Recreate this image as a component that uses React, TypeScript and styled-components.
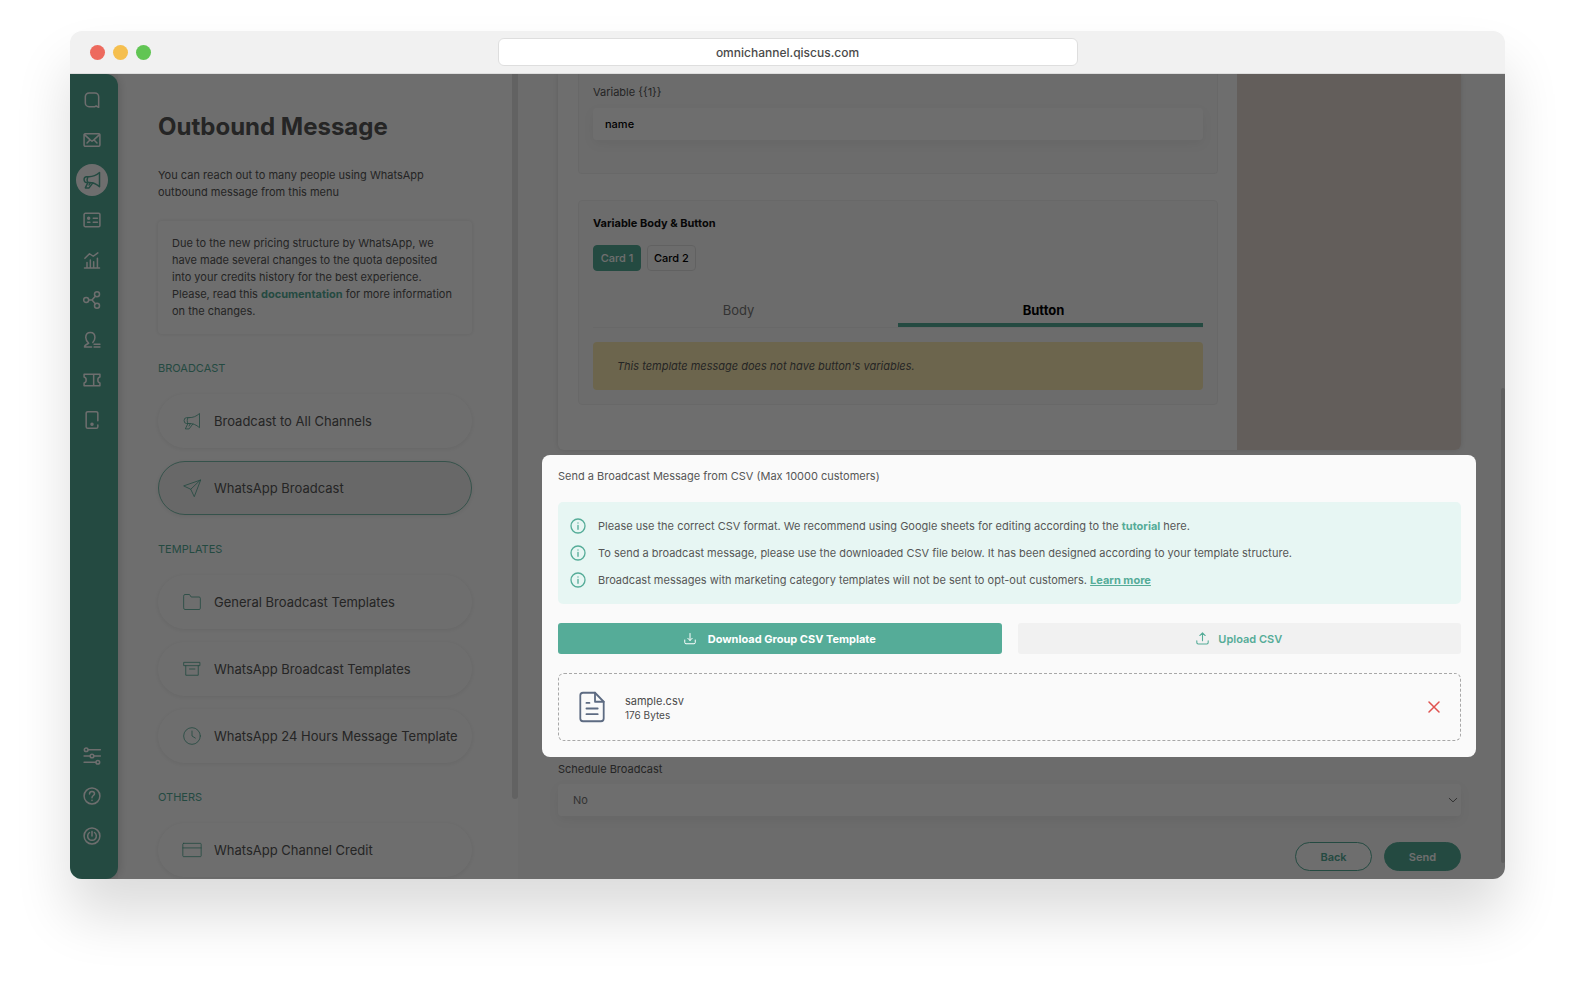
import React from 'react';
import styled, { createGlobalStyle, css } from 'styled-components';

const green = '#55ac98';
const ink = '#565656';

const GlobalStyle = createGlobalStyle`
  *, *::before, *::after { box-sizing: border-box; }
  body {
    margin: 0;
    background: #fff;
    color: ${ink};
    font-family: Inter, 'Liberation Sans', sans-serif;
    font-size: 11px;
    line-height: 16px;
  }
  button, input, select { font: inherit; color: inherit; }
  button { cursor: pointer; }
  h1, h2, p, ul { margin: 0; padding: 0; }
  a { color: inherit; text-decoration: none; }
`;

/* ---------- icons ---------- */

const Svg = styled.svg<{ $size: number }>`
  display: block;
  flex: none;
  width: ${(p) => p.$size}px;
  height: ${(p) => p.$size}px;
  fill: none;
  stroke: currentColor;
  stroke-linecap: round;
  stroke-linejoin: round;
`;

type IconProps = { size?: number; weight?: number };

const icon = (children: React.ReactNode) =>
  ({ size = 20, weight = 1.8 }: IconProps) => (
    <Svg $size={size} viewBox="0 0 24 24" strokeWidth={weight} aria-hidden="true">
      {children}
    </Svg>
  );

const LogoIcon = icon(<path d="M20 20.600V8a4.500 4.500 0 0 0-4.500-4.500H8.500A4.500 4.500 0 0 0 4 8v7.500A4.500 4.500 0 0 0 8.500 20h7l1.500-.8 3 1.600" />);
const MailIcon = icon(
  <>
    <rect x="2.500" y="4.500" width="19" height="15" rx="1.500" />
    <path d="M3 5.500l6.500 6 2.500 2 2.500-2 6.500-6M9.500 12L6 15.500M14.500 12l3.500 3.500" />
  </>,
);
const MegaphoneIcon = icon(
  <>
    <path d="M8.500 8c5 0 8.500-1.500 12.500-5v17c-4-3.500-7.500-5-12.500-5M8.500 8H5.500a3 3.500 0 0 0 0 7h3M7 8.200c-1 2-1 4.600 0 6.600" />
    <path d="M7 15.200L4 21.500h4.500l4.500-6M10 15.200L8.500 18" />
  </>,
);
const ContactIcon = icon(
  <>
    <rect x="2.500" y="4" width="19" height="16" rx="1.500" />
    <circle cx="8" cy="9.800" r="1.200" fill="currentColor" />
    <path d="M6.700 14.700h2.800M13.500 10h5M13.500 14.700h5" />
  </>,
);
const ChartIcon = icon(<path d="M3 21.500h18M6 21v-6M10 21v-9M14 21v-7M18.500 21V10M3.500 10l5.500-5.500 4.500 3L19 3.500" />);
const ShareIcon = icon(
  <>
    <circle cx="5" cy="12" r="3" />
    <circle cx="18" cy="5" r="3" />
    <circle cx="18" cy="19" r="3" />
    <path d="M8 12h4l4-4.500M12 12l4 4.500" />
  </>,
);
const AgentIcon = icon(<path d="M3 20.500h8.500M3 20.500c0-2.500 1.500-3 5-4.500-2-2-3.500-4-3.500-7 0-4 2-6 5.500-6s5.500 2 5.500 6c0 2.500-1 4.500-2.500 6M14.500 17h7M14.500 20.500h7" />);
const TicketIcon = icon(<path d="M2.500 5h19v3.500c-1.500.3-2.500 1.700-2.500 3.500s1 3.200 2.500 3.500V19h-19v-3.500C4 15.200 5 13.800 5 12s-1-3.200-2.500-3.500zM14 5v14" />);
const DeviceIcon = icon(
  <>
    <path d="M19 13V4a2 2 0 0 0-2-2H7a2 2 0 0 0-2 2v16a2 2 0 0 0 2 2h10a2 2 0 0 0 2-2v-2" />
    <circle cx="12" cy="17" r="1.200" fill="currentColor" />
  </>,
);
const SlidersIcon = icon(
  <>
    <circle cx="5" cy="4.500" r="2.200" />
    <circle cx="12" cy="12" r="2.200" />
    <circle cx="19" cy="19.500" r="2.200" />
    <path d="M7.500 4.500H22M2.500 12h7M14.500 12H22M2.500 19.500h14" />
  </>,
);
const HelpIcon = icon(
  <>
    <circle cx="12" cy="12" r="9.500" />
    <path d="M9 9.500c0-1.700 1.300-3 3-3s3 1.300 3 2.800c0 2-3 2.200-3 4.700M12 17.200v.1" />
  </>,
);
const PowerIcon = icon(
  <>
    <circle cx="12" cy="12" r="9.500" />
    <path d="M12 6.500v5.500M9 7.800a5.200 5.200 0 1 0 6 0" />
  </>,
);
const SendIcon = icon(<path d="M22 2.500L2 9.500l8.500 4L14.500 22zM22 2.500L10.500 13.500" />);
const FolderIcon = icon(<path d="M2 4.500A1.500 1.500 0 0 1 3.500 3H9l2 3h9.500A1.500 1.500 0 0 1 22 7.500v12a1.500 1.500 0 0 1-1.500 1.500h-17A1.500 1.500 0 0 1 2 19.500z" />);
const ArchiveIcon = icon(<path d="M2.500 4h19v4h-19zM4.500 8v11.500h15V8M9 12h6.500" />);
const ClockIcon = icon(
  <>
    <circle cx="12" cy="12" r="10" />
    <path d="M12 6v6l4 2.500" />
  </>,
);
const CardIcon = icon(
  <>
    <rect x="1" y="4" width="22" height="16" rx="1" />
    <path d="M1 9.500h22" />
  </>,
);
const InfoIcon = icon(
  <>
    <circle cx="12" cy="12" r="10.500" />
    <path d="M12 11v6M12 7.500v.1" />
  </>,
);
const DownloadIcon = icon(<path d="M12 1v14M7.500 10.500L12 15l4.500-4.500M1.500 14v5a2.500 2.500 0 0 0 2.500 2.500h16a2.500 2.500 0 0 0 2.500-2.500v-5" />);
const UploadIcon = icon(<path d="M12 16V1.500M7 6.500l5-5 5 5M1.500 16v3.500A2.500 2.500 0 0 0 4 22h16a2.500 2.500 0 0 0 2.500-2.500V16" />);
const FileIcon = icon(
  <>
    <path d="M14 2.500H6A1.800 1.800 0 0 0 4.200 4.300v15.400A1.800 1.800 0 0 0 6 21.500h12a1.800 1.800 0 0 0 1.800-1.800V8.500z" />
    <path d="M14 2.500v6h5.800M8.300 9.300h2M8.300 13h7.500M8.300 16.800h7.500" />
  </>,
);
const CloseIcon = icon(<path d="M2 2l20 20M22 2L2 22" />);
const ChevronIcon = icon(<path d="M3 8l9 8.500L21 8" />);

/* ---------- browser window ---------- */

const Page = styled.div`
  padding: 31px 70px 109px;
`;

const BrowserWindow = styled.div`
  border-radius: 12px;
  overflow: hidden;
  min-width: 960px;
`;

const Shadow = styled.div`
  border-radius: 12px;
  box-shadow: 0 36px 56px rgba(0, 0, 0, 0.14);
`;

const TitleBar = styled.header`
  display: grid;
  grid-template-columns: 1fr 580px 1fr;
  align-items: center;
  height: 43px;
  padding: 0 20px;
  background: #f1f1f1;
  border-bottom: 1px solid #dedede;
`;

const Lights = styled.div`
  display: flex;
  gap: 8px;
`;

const Light = styled.span<{ $color: string }>`
  width: 15px;
  height: 15px;
  border-radius: 50%;
  background: ${(p) => p.$color};
`;

const Address = styled.input`
  height: 28px;
  width: 100%;
  border: 1px solid #dedede;
  border-radius: 6px;
  background: #fff;
  color: #4a4a4a;
  font-size: 12px;
  font-weight: 500;
  text-align: center;
`;

const Body = styled.div`
  position: relative;
  display: flex;
  isolation: isolate;
  overflow: hidden;
  background: #fafafa;
`;

/* ---------- rail ---------- */

const Rail = styled.nav`
  position: relative;
  z-index: 1;
  flex: none;
  display: flex;
  flex-direction: column;
  align-items: center;
  width: 48px;
  padding: 6px 4px 23px 0;
  background: ${green};
  border-radius: 0 12px 12px 0;
  box-shadow: 2px 0 8px rgba(0, 0, 0, 0.14);
`;

const RailSpacer = styled.div`
  flex: 1;
`;

const RailLink = styled.a<{ $active?: boolean }>`
  display: grid;
  place-items: center;
  width: 32px;
  height: 32px;
  margin: 4px 0;
  border-radius: 50%;
  color: #fff;
  ${(p) => p.$active && css`
    background: #fff;
    color: ${green};
  `}
`;

/* ---------- menu column ---------- */

const Menu = styled.aside`
  flex: none;
  display: flex;
  width: 400px;
  background: #fff;
`;

const MenuContent = styled.div`
  flex: 1;
  min-width: 0;
  padding: 38px 40px 0;
`;

const Thumb = styled.div`
  flex: none;
  width: 6px;
  height: 90%;
  border-radius: 0 0 3px 3px;
  background: #e3e3e3;
`;

const Title = styled.h1`
  font-size: 24px;
  line-height: 30px;
  font-weight: 700;
`;

const Intro = styled.p`
  margin-top: 25px;
  line-height: 17px;
`;

const Notice = styled.p`
  margin-top: 20px;
  padding: 14px;
  line-height: 17px;
  border-radius: 4px;
  box-shadow: 0 0 4px rgba(0, 0, 0, 0.1);
`;

const Strong = styled.a<{ $underline?: boolean }>`
  color: ${green};
  font-weight: 700;
  text-decoration: ${(p) => (p.$underline ? 'underline' : 'none')};
`;

const GroupTitle = styled.h2`
  margin: 26px 0 18px;
  color: ${green};
  font-size: 11px;
  line-height: 16px;
  font-weight: 400;
`;

const PillList = styled.div`
  display: flex;
  flex-direction: column;
  gap: 13px;
`;

const Pill = styled.a<{ $active?: boolean }>`
  display: flex;
  align-items: center;
  gap: 12px;
  height: 54px;
  padding: 0 0 0 23px;
  border: 1px solid ${(p) => (p.$active ? '#7cbfae' : 'transparent')};
  border-radius: 27px;
  background: ${(p) => (p.$active ? '#f2f2f2' : '#fff')};
  box-shadow: 0 1px 5px rgba(0, 0, 0, 0.08);
  font-size: 13px;
  line-height: 18px;
  white-space: nowrap;
  svg { color: ${green}; }
`;

/* ---------- main column ---------- */

const Main = styled.main`
  flex: 1;
  min-width: 0;
  padding: 0 44px 8px 40px;
`;

const MainThumb = styled.div`
  position: absolute;
  right: 0;
  top: 39%;
  width: 4px;
  height: 59%;
  border-radius: 2px;
  background: #dcdcdc;
`;

const Template = styled.section`
  display: flex;
  background: #fff;
  border-radius: 0 0 6px 6px;
  box-shadow: 0 0 5px rgba(0, 0, 0, 0.12);
  overflow: hidden;
`;

const Variables = styled.div`
  flex: 1;
  display: flex;
  flex-direction: column;
  gap: 26px;
  padding: 0 19px 45px 20px;
`;

const Preview = styled.div`
  width: 224px;
  background: #e5dad3;
`;

const Box = styled.div<{ $open?: boolean }>`
  padding: 14px;
  border: 1px solid #f2f2f2;
  border-radius: 4px;
  background: #fafafa;
  ${(p) => p.$open && css`
    border-top: 0;
    border-radius: 0 0 4px 4px;
    padding: 10px 14px 33px;
  `}
`;

const FieldLabel = styled.label`
  display: block;
`;

const TextInput = styled.input`
  display: block;
  width: 100%;
  height: 32px;
  margin-top: 8px;
  padding: 0 12px;
  border: 0;
  border-radius: 4px;
  background: #fff;
  color: #000;
  font-weight: 500;
  box-shadow: 0 4px 12px rgba(0, 0, 0, 0.06);
`;

const BoxTitle = styled.h2`
  font-size: 11px;
  line-height: 16px;
  font-weight: 700;
  color: #111;
`;

const Chips = styled.div`
  display: flex;
  gap: 6px;
  margin-top: 14px;
`;

const Chip = styled.button<{ $active?: boolean }>`
  min-width: 48px;
  height: 26px;
  padding: 0 6px;
  border: 1px solid ${(p) => (p.$active ? green : '#e2e2e2')};
  border-radius: 4px;
  background: ${(p) => (p.$active ? green : 'transparent')};
  color: ${(p) => (p.$active ? '#fff' : '#000')};
  font-weight: 500;
`;

const Tabs = styled.div`
  display: grid;
  grid-template-columns: 1fr 1fr;
  margin-top: 20px;
  border-bottom: 1px solid #f2f2f2;
`;

const Tab = styled.button<{ $active?: boolean }>`
  height: 36px;
  padding: 5px 14px 0 0;
  border: 0;
  border-bottom: 4px solid ${(p) => (p.$active ? green : 'transparent')};
  border-radius: 3px 3px 0 0;
  background: none;
  color: ${(p) => (p.$active ? '#000' : '#777')};
  font-size: 13px;
  font-weight: ${(p) => (p.$active ? 700 : 400)};
`;

const Warning = styled.p`
  margin-top: 14px;
  padding: 16px 24px;
  border-radius: 4px;
  background: #fbeab2;
  font-style: italic;
`;

/* The lit panel; its spread shadow dims everything else in the window. */
const Spotlight = styled.section`
  position: relative;
  z-index: 2;
  margin: 5px -15px 0 -16px;
  padding: 13px 15px 16px 16px;
  border-radius: 8px;
  background: #fafafa;
  box-shadow: 0 0 0 4000px rgba(0, 0, 0, 0.57);
`;

const InfoList = styled.ul`
  display: flex;
  flex-direction: column;
  gap: 11px;
  margin-top: 18px;
  padding: 16px 12px;
  list-style: none;
  border-radius: 5px;
  background: #e7f6f3;
`;

const InfoRow = styled.li`
  display: flex;
  align-items: center;
  gap: 12px;
  svg { color: ${green}; }
`;

const Actions = styled.div`
  display: grid;
  grid-template-columns: 1fr 1fr;
  gap: 16px;
  margin-top: 19px;
`;

const ActionButton = styled.button<{ $primary?: boolean }>`
  display: flex;
  align-items: center;
  justify-content: center;
  gap: ${(p) => (p.$primary ? 12 : 9)}px;
  height: 31px;
  border: 0;
  border-radius: 3px;
  background: ${(p) => (p.$primary ? green : '#f1f1f1')};
  color: ${(p) => (p.$primary ? '#fff' : green)};
  font-weight: ${(p) => (p.$primary ? 700 : 600)};
`;

const FileRow = styled.div`
  display: flex;
  align-items: center;
  gap: 15px;
  height: 68px;
  margin-top: 19px;
  padding: 0 20px 0 15px;
  border: 1px dashed #a8a8a8;
  border-radius: 6px;
  color: #5d6b82;
`;

const FileInfo = styled.div`
  flex: 1;
  color: #4a4a4a;
`;

const FileSize = styled.p`
  font-size: 10px;
  line-height: 12px;
`;

const RemoveButton = styled.button`
  display: grid;
  place-items: center;
  padding: 0;
  border: 0;
  background: none;
  color: #e0524f;
`;

const Schedule = styled.div`
  margin-top: 4px;
`;

const SelectWrap = styled.div`
  position: relative;
  margin-top: 7px;
  svg {
    position: absolute;
    right: 3px;
    top: 11px;
    pointer-events: none;
  }
`;

const Select = styled.select`
  display: block;
  appearance: none;
  width: 100%;
  height: 32px;
  padding: 0 15px;
  border: 0;
  border-radius: 4px;
  background: #fff;
  color: #777;
  box-shadow: 0 4px 12px rgba(0, 0, 0, 0.06);
`;

const Footer = styled.div`
  display: flex;
  justify-content: flex-end;
  gap: 12px;
  margin-top: 26px;
`;

const RoundButton = styled.button<{ $primary?: boolean }>`
  width: 77px;
  height: 29px;
  border: 1px solid ${green};
  border-radius: 15px;
  background: ${(p) => (p.$primary ? green : '#fff')};
  color: ${(p) => (p.$primary ? '#fff' : green)};
  font-weight: 600;
`;

/* ---------- data ---------- */

const railTop = [
  { label: 'Home', Icon: LogoIcon },
  { label: 'Inbox', Icon: MailIcon },
  { label: 'Outbound', Icon: MegaphoneIcon, active: true },
  { label: 'Contacts', Icon: ContactIcon },
  { label: 'Analytics', Icon: ChartIcon },
  { label: 'Integration', Icon: ShareIcon },
  { label: 'Agents', Icon: AgentIcon },
  { label: 'Tickets', Icon: TicketIcon },
  { label: 'Device', Icon: DeviceIcon },
];

const railBottom = [
  { label: 'Settings', Icon: SlidersIcon },
  { label: 'Help', Icon: HelpIcon },
  { label: 'Log out', Icon: PowerIcon },
];

const groups = [
  {
    title: 'BROADCAST',
    items: [
      { label: 'Broadcast to All Channels', Icon: MegaphoneIcon },
      { label: 'WhatsApp Broadcast', Icon: SendIcon, active: true },
    ],
  },
  {
    title: 'TEMPLATES',
    items: [
      { label: 'General Broadcast Templates', Icon: FolderIcon },
      { label: 'WhatsApp Broadcast Templates', Icon: ArchiveIcon },
      { label: 'WhatsApp 24 Hours Message Template', Icon: ClockIcon },
    ],
  },
  {
    title: 'OTHERS',
    items: [{ label: 'WhatsApp Channel Credit', Icon: CardIcon }],
  },
];

export default function App() {
  return (
    <>
      <GlobalStyle />
      <Page>
        <Shadow>
          <BrowserWindow>
            <TitleBar>
              <Lights>
                <Light $color="#ed6a5e" />
                <Light $color="#f5bf4f" />
                <Light $color="#61c554" />
              </Lights>
              <Address aria-label="Address" defaultValue="omnichannel.qiscus.com" />
            </TitleBar>
            <Body>
              <Rail aria-label="Sections">
                {railTop.map(({ label, Icon, active }) => (
                  <RailLink key={label} href="#" aria-label={label} $active={active}>
                    <Icon />
                  </RailLink>
                ))}
                <RailSpacer />
                {railBottom.map(({ label, Icon }) => (
                  <RailLink key={label} href="#" aria-label={label}>
                    <Icon />
                  </RailLink>
                ))}
              </Rail>

              <Menu>
                <MenuContent>
                  <Title>Outbound Message</Title>
                  <Intro>You can reach out to many people using WhatsApp outbound message from this menu</Intro>
                  <Notice>
                    Due to the new pricing structure by WhatsApp, we have made several changes to the quota
                    deposited into your credits history for the best experience. Please, read this{' '}
                    <Strong href="#">documentation</Strong> for more information on the changes.
                  </Notice>
                  {groups.map((group) => (
                    <React.Fragment key={group.title}>
                      <GroupTitle>{group.title}</GroupTitle>
                      <PillList>
                        {group.items.map(({ label, Icon, active }: any) => (
                          <Pill key={label} href="#" $active={active}>
                            <Icon weight={1} />
                            {label}
                          </Pill>
                        ))}
                      </PillList>
                    </React.Fragment>
                  ))}
                </MenuContent>
                <Thumb />
              </Menu>

              <Main>
                <Template>
                  <Variables>
                    <Box $open>
                      <FieldLabel htmlFor="variable">{'Variable {{1}}'}</FieldLabel>
                      <TextInput id="variable" defaultValue="name" />
                    </Box>
                    <Box>
                      <BoxTitle>Variable Body &amp; Button</BoxTitle>
                      <Chips>
                        <Chip $active>Card 1</Chip>
                        <Chip>Card 2</Chip>
                      </Chips>
                      <Tabs role="tablist">
                        <Tab role="tab" aria-selected="false">Body</Tab>
                        <Tab role="tab" aria-selected="true" $active>Button</Tab>
                      </Tabs>
                      <Warning>This template message does not have button's variables.</Warning>
                    </Box>
                  </Variables>
                  <Preview />
                </Template>

                <Spotlight>
                  <p>Send a Broadcast Message from CSV (Max 10000 customers)</p>
                  <InfoList>
                    <InfoRow>
                      <InfoIcon size={16} weight={2} />
                      <span>
                        Please use the correct CSV format. We recommend using Google sheets for editing
                        according to the <Strong href="#">tutorial</Strong> here.
                      </span>
                    </InfoRow>
                    <InfoRow>
                      <InfoIcon size={16} weight={2} />
                      <span>
                        To send a broadcast message, please use the downloaded CSV file below. It has been
                        designed according to your template structure.
                      </span>
                    </InfoRow>
                    <InfoRow>
                      <InfoIcon size={16} weight={2} />
                      <span>
                        Broadcast messages with marketing category templates will not be sent to opt-out
                        customers. <Strong href="#" $underline>Learn more</Strong>
                      </span>
                    </InfoRow>
                  </InfoList>
                  <Actions>
                    <ActionButton $primary>
                      <DownloadIcon size={12} weight={2} />
                      Download Group CSV Template
                    </ActionButton>
                    <ActionButton>
                      <UploadIcon size={13} weight={2} />
                      Upload CSV
                    </ActionButton>
                  </Actions>
                  <FileRow>
                    <FileIcon size={36} weight={1.2} />
                    <FileInfo>
                      <p>sample.csv</p>
                      <FileSize>176 Bytes</FileSize>
                    </FileInfo>
                    <RemoveButton aria-label="Remove file">
                      <CloseIcon size={12} weight={3} />
                    </RemoveButton>
                  </FileRow>
                </Spotlight>

                <Schedule>
                  <FieldLabel htmlFor="schedule">Schedule Broadcast</FieldLabel>
                  <SelectWrap>
                    <Select id="schedule" defaultValue="No">
                      <option>No</option>
                      <option>Yes</option>
                    </Select>
                    <ChevronIcon size={10} weight={2} />
                  </SelectWrap>
                </Schedule>
                <Footer>
                  <RoundButton>Back</RoundButton>
                  <RoundButton $primary>Send</RoundButton>
                </Footer>
              </Main>
              <MainThumb />
            </Body>
          </BrowserWindow>
        </Shadow>
      </Page>
    </>
  );
}
